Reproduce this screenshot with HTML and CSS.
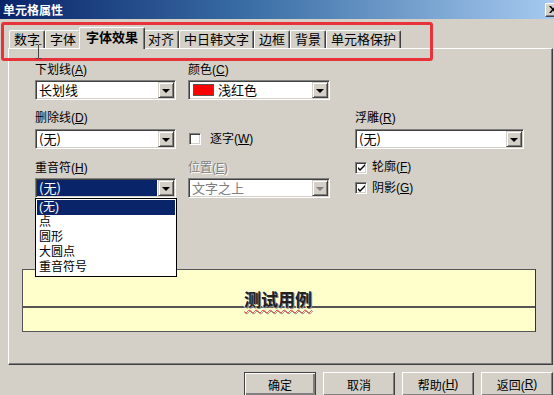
FILE: index.html
```html
<!DOCTYPE html>
<html lang="zh-CN">
<head>
<meta charset="utf-8">
<title>单元格属性</title>
<link rel="stylesheet" href="styles.css">
</head>
<body>
<div class="window">
  <div class="titlebar">
    <span class="title">单元格属性</span>
    <span class="close"><svg width="8" height="7" viewBox="0 0 8 7"><path d="M0 0h2l2 2.5L6 0h2L5 3.5 8 7H6L4 4.5 2 7H0l3-3.5z" fill="#000"/></svg></span>
  </div>

  <div class="tabarea">
    <div class="tab">数字</div>
    <div class="tab">字体</div>
    <div class="tab active">字体效果</div>
    <div class="tab">对齐</div>
    <div class="tab">中日韩文字</div>
    <div class="tab">边框</div>
    <div class="tab">背景</div>
    <div class="tab">单元格保护</div>
  </div>

  <div class="page">
    <div class="fields">
      <div class="lbl c1 r1">下划线(<u>A</u>)</div>
      <div class="combo c1 r2"><span class="combo-text">长划线</span><span class="combo-btn"><i class="arrow"></i></span></div>

      <div class="lbl c2 r1">颜色(<u>C</u>)</div>
      <div class="combo c2 r2"><span class="combo-text"><span class="swatch"></span>浅红色</span><span class="combo-btn"><i class="arrow"></i></span></div>

      <div class="lbl c1 r3">删除线(<u>D</u>)</div>
      <div class="combo c1 r4"><span class="combo-text">(无)</span><span class="combo-btn"><i class="arrow"></i></span></div>

      <div class="check c2 r4"><span class="box"></span><span class="check-text">逐字(<u>W</u>)</span></div>

      <div class="lbl c3 r3">浮雕(<u>R</u>)</div>
      <div class="combo c3 r4"><span class="combo-text">(无)</span><span class="combo-btn"><i class="arrow"></i></span></div>

      <div class="lbl c1 r5">重音符(<u>H</u>)</div>
      <div class="combo focused c1 r6">
        <span class="combo-text">(无)</span><span class="combo-btn"><i class="arrow"></i></span>
        <ul class="droplist">
          <li class="sel">(无)</li>
          <li>点</li>
          <li>圆形</li>
          <li>大圆点</li>
          <li>重音符号</li>
        </ul>
      </div>

      <div class="lbl disabled c2 r5">位置(<u>E</u>)</div>
      <div class="combo disabled c2 r6"><span class="combo-text">文字之上</span><span class="combo-btn"><i class="arrow"></i></span></div>

      <div class="check c3 r5"><span class="box"><svg width="9" height="9" viewBox="0 0 9 9"><path d="M1 4l2 2 5-5v2L3 8 1 6z" fill="#000"/></svg></span><span class="check-text">轮廓(<u>F</u>)</span></div>
      <div class="check c3 r6"><span class="box"><svg width="9" height="9" viewBox="0 0 9 9"><path d="M1 4l2 2 5-5v2L3 8 1 6z" fill="#000"/></svg></span><span class="check-text">阴影(<u>G</u>)</span></div>
    </div>

    <div class="preview">
      <div class="preview-top"><span class="sample">测试用例</span></div>
      <div class="preview-bottom"></div>
    </div>
  </div>

  <div class="buttons">
    <div class="btn default">确定</div>
    <div class="btn">取消</div>
    <div class="btn">帮助(<u>H</u>)</div>
    <div class="btn">返回(<u>R</u>)</div>
  </div>

  <div class="annot"></div>
  <svg class="cursor" width="7" height="15" viewBox="0 0 7 15"><path d="M0.5 0.5h2.5v0.5M3.5 1v13M0.5 14.5h2.5M6.5 0.5h-2.5M6.5 14.5h-2.5" stroke="#444" stroke-width="1" fill="none"/></svg>
</div>
</body>
</html>
```

FILE: styles.css
```css
* { box-sizing: border-box; }

html, body {
  margin: 0;
  padding: 0;
  background: #d4d0c8;
}

body {
  font-family: "Liberation Sans", "Noto Sans CJK SC", sans-serif;
  font-size: 12px;
  color: #000;
}

.window {
  position: relative;
  width: 554px;
  height: 395px;
  overflow: hidden;
  background: #d4d0c8;
}

/* title bar */
.titlebar {
  height: 19px;
  display: flex;
  align-items: center;
  justify-content: space-between;
  padding-left: 3px;
  background: linear-gradient(to right, #0a246a 0%, #3a6ea5 45%, #a6caf0 100%);
}

.title {
  color: #fff;
  font-weight: bold;
  font-size: 12px;
  font-family: "Noto Sans CJK SC", sans-serif;
  line-height: 14px;
}

.close {
  width: 16px;
  height: 14px;
  margin-right: -7px;
  display: flex;
  align-items: center;
  justify-content: center;
  background: #d4d0c8;
  border: 1px solid;
  border-color: #fff #404040 #404040 #fff;
  box-shadow: inset -1px -1px #808080;
}

/* tabs */
.tabarea {
  height: 29px;
  display: flex;
  align-items: flex-end;
  padding-left: 9px;
  position: relative;
  z-index: 2;
}

.tab {
  height: 18px;
  padding: 0 4px;
  font-size: 13px;
  line-height: 16px;
  font-family: "Noto Sans CJK SC", sans-serif;
  border-top: 1px solid #fff;
  border-left: 1px solid #fff;
  border-right: 1px solid #404040;
  border-radius: 2px 2px 0 0;
  box-shadow: inset -1px 0 #808080;
  color: #000;
  white-space: nowrap;
}

.tab.active {
  height: 22px;
  margin: 0 -2px -1px -2px;
  padding: 1px 6px 0;
  font-weight: bold;
  background: #d4d0c8;
  position: relative;
  z-index: 3;
}

/* page */
.page {
  height: 317px;
  margin: 0 1px 0 8px;
  border-top: 1px solid #fff;
  border-left: 1px solid #fff;
  border-right: 1px solid #404040;
  border-bottom: 1px solid #404040;
  box-shadow: inset -1px -1px #808080;
}

.fields {
  display: grid;
  grid-template-columns: 141px 12px 142px 25px 169px;
  grid-template-rows: 17px 20px 29px 20px 29px 20px;
  padding: 14px 0 0 26px;
}

.c1 { grid-column: 1; }
.c2 { grid-column: 3; }
.c3 { grid-column: 5; }
.r1 { grid-row: 1; }
.r2 { grid-row: 2; }
.r3 { grid-row: 3; }
.r4 { grid-row: 4; }
.r5 { grid-row: 5; }
.r6 { grid-row: 6; }

.lbl {
  font-size: 12px;
  line-height: 15px;
  white-space: nowrap;
}

.lbl.r1 { align-self: start; }
.lbl.r3 { align-self: end; margin-bottom: 3px; }
.lbl.r5 { align-self: end; margin-bottom: 2px; }

.lbl.disabled {
  color: #808080;
  text-shadow: 1px 1px 0 #fff;
}

u { text-decoration: underline; text-underline-offset: 1px; }

/* combobox */
.combo {
  position: relative;
  height: 20px;
  display: flex;
  background: #fff;
  border: 1px solid;
  border-color: #808080 #fff #fff #808080;
  box-shadow: inset 1px 1px #404040, inset -1px -1px #d4d0c8;
  padding: 1px;
}

.combo-text {
  flex: 1;
  display: flex;
  align-items: center;
  padding-left: 2px;
  font-size: 13px;
  line-height: 16px;
  font-family: "Noto Sans CJK SC", sans-serif;
  white-space: nowrap;
}

.combo.focused .combo-text {
  background: #0a246a;
  color: #fff;
  margin-right: 1px;
}

.combo.disabled .combo-text {
  color: #808080;
}

.combo-btn {
  width: 16px;
  height: 16px;
  display: flex;
  align-items: center;
  justify-content: center;
  background: #d4d0c8;
  border: 1px solid;
  border-color: #d4d0c8 #404040 #404040 #d4d0c8;
  box-shadow: inset 1px 1px #fff, inset -1px -1px #808080;
}

.arrow {
  width: 0;
  height: 0;
  border-left: 4px solid transparent;
  border-right: 4px solid transparent;
  border-top: 4px solid #000;
  margin-top: 1px;
}

.combo.disabled .arrow {
  border-top-color: #808080;
}

.swatch {
  display: inline-block;
  width: 21px;
  height: 12px;
  background: #ff0000;
  border: 1px solid #555;
  margin: 0 4px 0 1px;
}

/* dropdown list */
.droplist {
  position: absolute;
  top: 19px;
  left: -1px;
  width: 142px;
  margin: 0;
  padding: 1px;
  list-style: none;
  background: #fff;
  border: 1px solid #000;
  z-index: 5;
}

.droplist li {
  height: 15px;
  line-height: 15px;
  padding-left: 2px;
  font-size: 12px;
  font-family: "Liberation Sans", "Noto Sans CJK SC", sans-serif;
  overflow: hidden;
}

.droplist li.sel {
  background: #0a246a;
  color: #fff;
}

/* checkbox */
.check {
  display: flex;
  align-items: center;
  gap: 5px;
  font-size: 12px;
  line-height: 15px;
  white-space: nowrap;
}

.check.r4 { align-self: center; margin-left: 1px; gap: 9px; }
.check.r5 { align-self: end; margin-bottom: 3px; }
.check.r6 { align-self: center; }

.box {
  width: 12px;
  height: 12px;
  background: #fff;
  border: 1px solid;
  border-color: #808080 #fff #fff #808080;
  box-shadow: inset 1px 1px #404040, inset -1px -1px #d4d0c8;
  display: flex;
  align-items: center;
  justify-content: center;
}

/* preview */
.preview {
  margin: 71px 0 0 13px;
  width: 514px;
  height: 63px;
  background: #ffffcc;
  border: 1px solid #555;
  border-right-color: #333;
  display: flex;
  flex-direction: column;
}

.preview-top {
  height: 38px;
  border-bottom: 2px solid #555;
  display: flex;
  justify-content: center;
  align-items: flex-end;
}

.sample {
  font-size: 17px;
  line-height: 17px;
  font-weight: bold;
  font-family: "Noto Sans CJK SC", sans-serif;
  color: #222;
  text-shadow: 1px 1px 0 #888, -1px 0 0 #fff;
  margin-bottom: -1px;
  margin-left: -2px;
  text-decoration: underline wavy #e03030;
  text-decoration-thickness: 1px;
  text-underline-offset: 3px;
}

.preview-bottom {
  flex: 1;
}

/* buttons */
.buttons {
  display: flex;
  justify-content: flex-end;
  gap: 7px;
  margin-top: 7px;
  padding-right: 1px;
}

.btn {
  width: 72px;
  height: 24px;
  display: flex;
  align-items: center;
  justify-content: center;
  font-size: 12px;
  background: #d4d0c8;
  border: 1px solid;
  border-color: #fff #404040 #404040 #fff;
  box-shadow: inset -1px -1px #808080;
  white-space: nowrap;
}

.btn.default {
  border-color: #404040;
  box-shadow: inset 1px 1px #fff, inset -2px -2px #808080;
}

/* annotation overlay */
.annot {
  position: absolute;
  left: 1px;
  top: 22px;
  width: 432px;
  height: 39px;
  border: 3px solid #e8323a;
  border-radius: 3px;
  z-index: 10;
  pointer-events: none;
}

.cursor {
  position: absolute;
  left: 35px;
  top: 44px;
  z-index: 11;
}
```
